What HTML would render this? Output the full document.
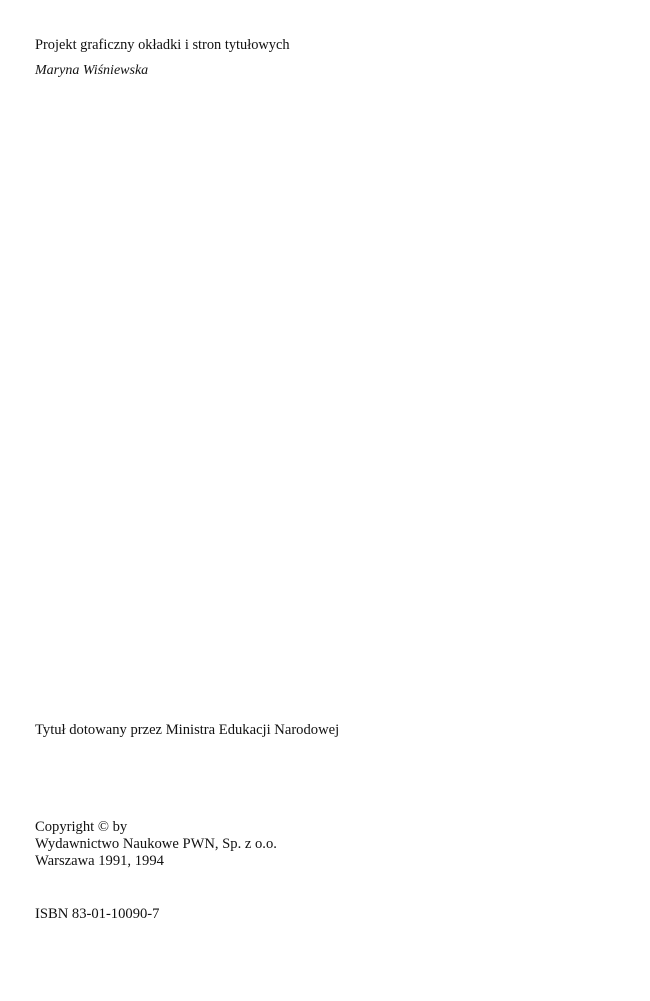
<!DOCTYPE html>
<html><head><meta charset="utf-8"><style>
html,body{margin:0;padding:0;background:#fff;}
body{width:650px;height:1001px;position:relative;overflow:hidden;font-family:"Liberation Serif",serif;font-size:14.6px;color:#111;}
.t{position:absolute;left:35px;white-space:nowrap;line-height:17px;}
</style></head><body>
<div class="t" style="top:37px;font-size:14.4px">Projekt graficzny okładki i stron tytułowych</div>
<div class="t" style="top:62px;font-style:italic;font-size:14px">Maryna Wiśniewska</div>
<div class="t" style="top:722px">Tytuł dotowany przez Ministra Edukacji Narodowej</div>
<div class="t" style="top:819px">Copyright © by</div>
<div class="t" style="top:836px">Wydawnictwo Naukowe PWN, Sp. z o.o.</div>
<div class="t" style="top:853px">Warszawa 1991, 1994</div>
<div class="t" style="top:906px">ISBN 83-01-10090-7</div>
</body></html>
